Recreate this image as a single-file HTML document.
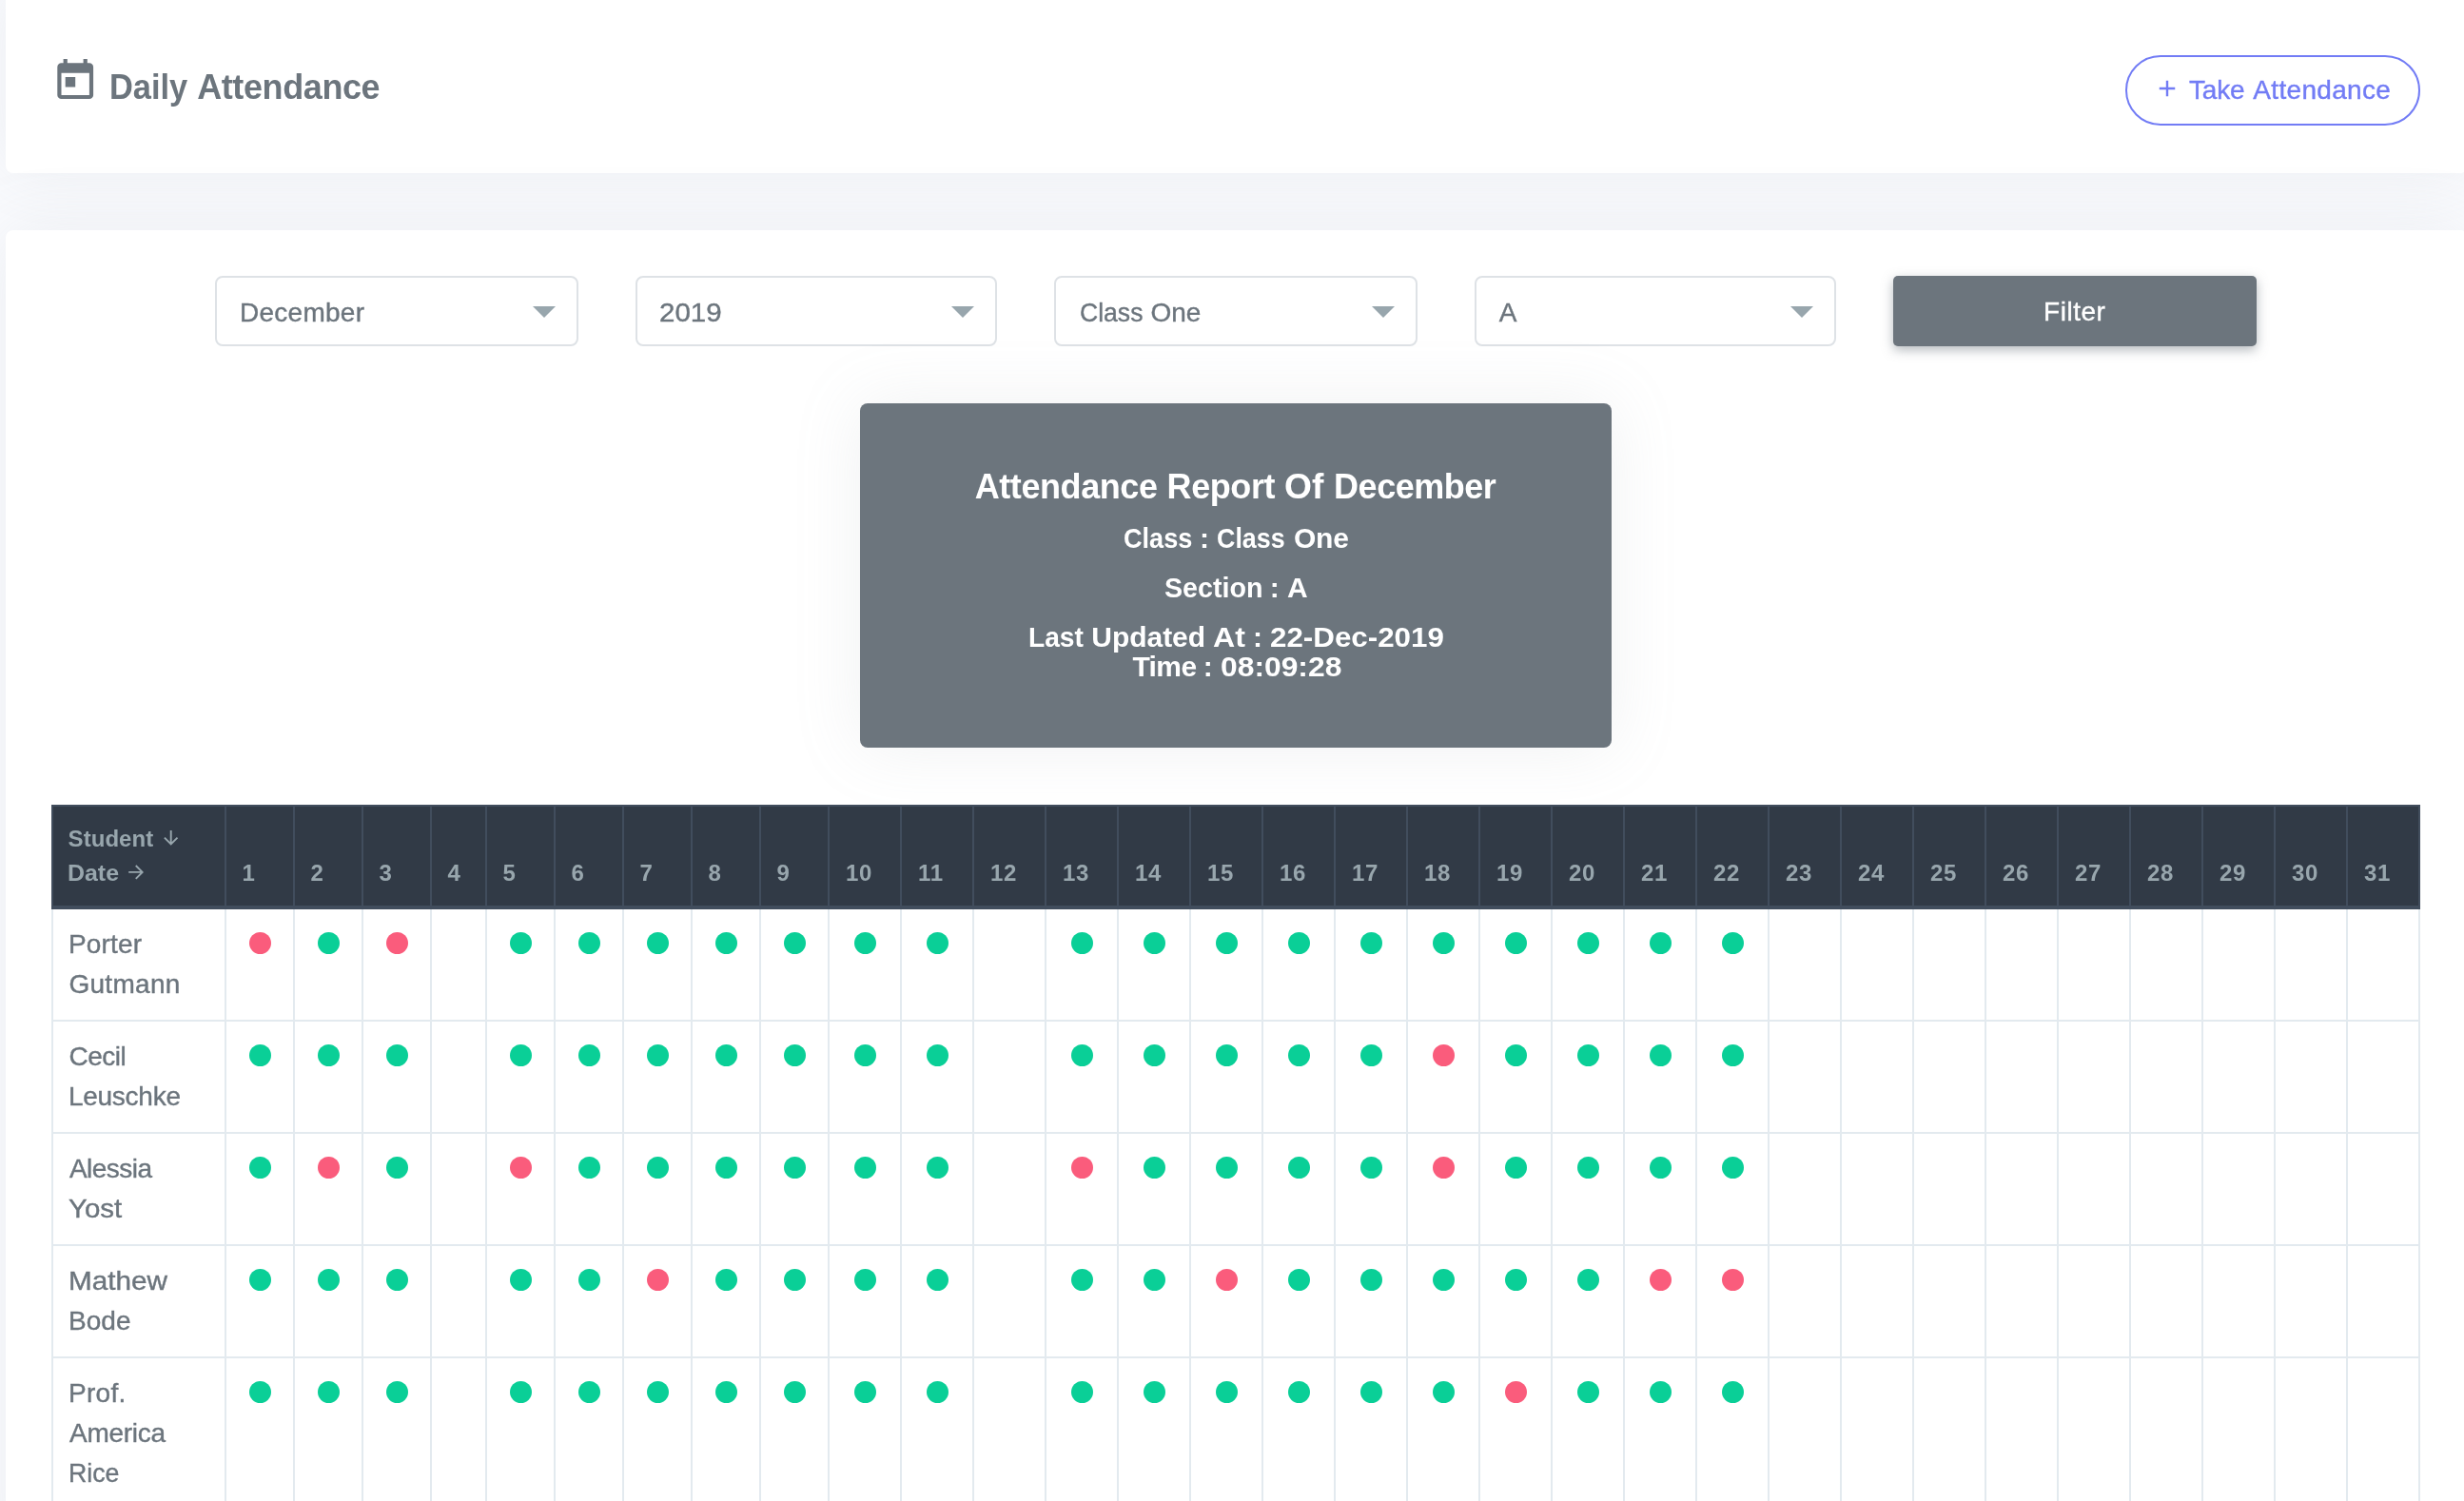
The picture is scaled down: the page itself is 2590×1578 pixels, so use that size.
<!DOCTYPE html><html><head><meta charset='utf-8'><title>Daily Attendance</title><style>
*{box-sizing:border-box}
html,body{margin:0;padding:0}
html{width:2590px;height:1578px;overflow:hidden}
body{width:2590px;height:1578px;overflow:hidden;position:relative;background:#fafbfe;font-family:'Liberation Sans', sans-serif;color:#6c757d}
.card{position:absolute;left:6px;width:2588px;background:#fff;border-radius:8px;box-shadow:0 0 70px 0 rgba(154,161,171,.15)}
.grp{margin:0;padding:0;position:static;display:block}
.t{transform-origin:0 50%;position:absolute;line-height:1;white-space:nowrap;margin:0;-webkit-text-stroke:0.4px currentColor}
.b{-webkit-text-stroke:0}
.sel{position:absolute;top:290px;height:74px;border:2px solid #dee2e6;border-radius:8px;background:#fff}
.sel i{position:absolute;right:22px;top:30px;width:0;height:0;border-left:12px solid transparent;border-right:12px solid transparent;border-top:12px solid #98a6ad}
.dot{position:absolute;width:23px;height:23px;border-radius:50%}
.g{background:#0acf97}
.r{background:#fa5c7c}
.v{position:absolute;width:2px}
.h{position:absolute;height:2px}
</style></head><body><div id='page' style='position:absolute;left:0;top:0;width:2590px;height:1578px;overflow:hidden;will-change:transform'>
<div class='card' style='top:-20px;height:202px'></div>
<div class='card' style='top:242px;height:1400px'></div>
<svg style='position:absolute;left:53.75px;top:60px' width='50.4' height='50.4' viewBox='0 0 24 24'><path fill='#6c757d' d='M7,10H12V15H7M19,19H5V8H19M19,3H18V1H16V3H8V1H6V3H5C3.89,3 3,3.9 3,5V19A2,2 0 0,0 5,21H19A2,2 0 0,0 21,19V5A2,2 0 0,0 19,3Z'/></svg>
<h4 class='grp' style='font-size:36px;font-weight:700;color:#6c757d'><span class='t b' style='left:115.0px;top:73.7px;transform:scaleX(0.9560)'>Daily</span> <span class='t b' style='left:207.2px;top:73.7px;letter-spacing:-0.400px'>Attendance</span></h4>
<div style='position:absolute;left:2234px;top:58px;width:310px;height:74px;border:2px solid #727cf5;border-radius:37px'></div>
<svg style='position:absolute;left:2268.2px;top:83.4px' width='20' height='20' viewBox='0 0 20 20'><path d='M10 1.75V18.25M1.75 10H18.25' stroke='#727cf5' stroke-width='2.4' fill='none'/></svg>
<span class='grp' style='font-size:28px;font-weight:400;color:#727cf5'><span class='t ' style='left:2301.1px;top:80.9px;letter-spacing:-0.233px'>Take</span> <span class='t ' style='left:2368.3px;top:80.9px;letter-spacing:0.322px'>Attendance</span></span>
<div class='sel' style='left:226px;width:382px'><i></i></div>
<span class='grp' style='font-size:28px;font-weight:400;color:#6c757d'><span class='t ' style='left:252.1px;top:314.6px;letter-spacing:0.243px'>December</span></span>
<div class='sel' style='left:668px;width:380px'><i></i></div>
<span class='grp' style='font-size:28px;font-weight:400;color:#6c757d'><span class='t ' style='left:693.1px;top:314.6px;transform:scaleX(1.0533)'>2019</span></span>
<div class='sel' style='left:1108px;width:382px'><i></i></div>
<span class='grp' style='font-size:28px;font-weight:400;color:#6c757d'><span class='t ' style='left:1134.6px;top:314.6px;transform:scaleX(0.9485)'>Class</span> <span class='t ' style='left:1209.4px;top:314.6px;letter-spacing:0.000px'>One</span></span>
<div class='sel' style='left:1550px;width:380px'><i></i></div>
<span class='grp' style='font-size:28px;font-weight:400;color:#6c757d'><span class='t ' style='left:1575.7px;top:314.6px'>A</span></span>
<div style='position:absolute;left:1990px;top:290px;width:382px;height:74px;background:#6c757d;border-radius:5px;box-shadow:0 4px 12px 0 rgba(108,117,125,.5)'></div>
<span class='grp' style='font-size:28px;font-weight:400;color:#fff'><span class='t ' style='left:2148.0px;top:313.8px;letter-spacing:0.540px'>Filter</span></span>
<div style='position:absolute;left:904px;top:424px;width:790px;height:362px;background:#6c757d;border-radius:8px;box-shadow:0 0 70px 0 rgba(154,161,171,.15)'></div>
<h4 class='grp' style='font-size:36px;font-weight:700;color:#fff'><span class='t b' style='left:1024.7px;top:494.3px;letter-spacing:-0.422px'>Attendance</span> <span class='t b' style='left:1226.6px;top:494.3px;letter-spacing:-0.420px'>Report</span> <span class='t b' style='left:1350.2px;top:494.3px;transform:scaleX(1.0342)'>Of</span> <span class='t b' style='left:1402.1px;top:494.3px;letter-spacing:-0.486px'>December</span></h4>
<h5 class='grp' style='font-size:30px;font-weight:700;color:#fff'><span class='t b' style='left:1180.9px;top:551.0px;transform:scaleX(0.9038)'>Class</span> <span class='t b' style='left:1261.1px;top:551.0px'>:</span> <span class='t b' style='left:1279.3px;top:551.0px;transform:scaleX(0.8949)'>Class</span> <span class='t b' style='left:1359.9px;top:551.0px;letter-spacing:-0.150px'>One</span></h5>
<h5 class='grp' style='font-size:30px;font-weight:700;color:#fff'><span class='t b' style='left:1223.5px;top:602.7px;transform:scaleX(0.9547)'>Section</span> <span class='t b' style='left:1334.8px;top:602.7px'>:</span> <span class='t b' style='left:1353.1px;top:602.7px'>A</span></h5>
<h5 class='grp' style='font-size:30px;font-weight:700;color:#fff'><span class='t b' style='left:1080.8px;top:655.0px;transform:scaleX(0.9390)'>Last</span> <span class='t b' style='left:1147.3px;top:655.0px;letter-spacing:-0.033px'>Updated</span> <span class='t b' style='left:1274.8px;top:655.0px;transform:scaleX(1.0700)'>At</span> <span class='t b' style='left:1317.0px;top:655.0px'>:</span> <span class='t b' style='left:1335.0px;top:655.0px;transform:scaleX(1.0439)'>22-Dec-2019</span></h5>
<h5 class='grp' style='font-size:30px;font-weight:700;color:#fff'><span class='t b' style='left:1190.4px;top:686.3px;letter-spacing:-0.567px'>Time</span> <span class='t b' style='left:1264.8px;top:686.3px'>:</span> <span class='t b' style='left:1282.7px;top:686.3px;transform:scaleX(1.0602)'>08:09:28</span></h5>
<div style='position:absolute;left:54px;top:846px;width:2490px;height:110px;background:#313a46'></div>
<div class='h' style='left:54px;top:846px;width:2490px;background:#414d5d'></div>
<div class='h' style='left:54px;top:952px;width:2490px;height:4px;background:#414d5d'></div>
<div class='v' style='left:54px;top:846px;height:106px;background:#414d5d'></div>
<div class='v' style='left:236px;top:846px;height:106px;background:#414d5d'></div>
<div class='v' style='left:308px;top:846px;height:106px;background:#414d5d'></div>
<div class='v' style='left:380px;top:846px;height:106px;background:#414d5d'></div>
<div class='v' style='left:452px;top:846px;height:106px;background:#414d5d'></div>
<div class='v' style='left:510px;top:846px;height:106px;background:#414d5d'></div>
<div class='v' style='left:582px;top:846px;height:106px;background:#414d5d'></div>
<div class='v' style='left:654px;top:846px;height:106px;background:#414d5d'></div>
<div class='v' style='left:726px;top:846px;height:106px;background:#414d5d'></div>
<div class='v' style='left:798px;top:846px;height:106px;background:#414d5d'></div>
<div class='v' style='left:870px;top:846px;height:106px;background:#414d5d'></div>
<div class='v' style='left:946px;top:846px;height:106px;background:#414d5d'></div>
<div class='v' style='left:1022px;top:846px;height:106px;background:#414d5d'></div>
<div class='v' style='left:1098px;top:846px;height:106px;background:#414d5d'></div>
<div class='v' style='left:1174px;top:846px;height:106px;background:#414d5d'></div>
<div class='v' style='left:1250px;top:846px;height:106px;background:#414d5d'></div>
<div class='v' style='left:1326px;top:846px;height:106px;background:#414d5d'></div>
<div class='v' style='left:1402px;top:846px;height:106px;background:#414d5d'></div>
<div class='v' style='left:1478px;top:846px;height:106px;background:#414d5d'></div>
<div class='v' style='left:1554px;top:846px;height:106px;background:#414d5d'></div>
<div class='v' style='left:1630px;top:846px;height:106px;background:#414d5d'></div>
<div class='v' style='left:1706px;top:846px;height:106px;background:#414d5d'></div>
<div class='v' style='left:1782px;top:846px;height:106px;background:#414d5d'></div>
<div class='v' style='left:1858px;top:846px;height:106px;background:#414d5d'></div>
<div class='v' style='left:1934px;top:846px;height:106px;background:#414d5d'></div>
<div class='v' style='left:2010px;top:846px;height:106px;background:#414d5d'></div>
<div class='v' style='left:2086px;top:846px;height:106px;background:#414d5d'></div>
<div class='v' style='left:2162px;top:846px;height:106px;background:#414d5d'></div>
<div class='v' style='left:2238px;top:846px;height:106px;background:#414d5d'></div>
<div class='v' style='left:2314px;top:846px;height:106px;background:#414d5d'></div>
<div class='v' style='left:2390px;top:846px;height:106px;background:#414d5d'></div>
<div class='v' style='left:2466px;top:846px;height:106px;background:#414d5d'></div>
<div class='v' style='left:2542px;top:846px;height:106px;background:#414d5d'></div>
<div class='v' style='left:54px;top:956px;height:700px;background:#e3eaef'></div>
<div class='v' style='left:236px;top:956px;height:700px;background:#e3eaef'></div>
<div class='v' style='left:308px;top:956px;height:700px;background:#e3eaef'></div>
<div class='v' style='left:380px;top:956px;height:700px;background:#e3eaef'></div>
<div class='v' style='left:452px;top:956px;height:700px;background:#e3eaef'></div>
<div class='v' style='left:510px;top:956px;height:700px;background:#e3eaef'></div>
<div class='v' style='left:582px;top:956px;height:700px;background:#e3eaef'></div>
<div class='v' style='left:654px;top:956px;height:700px;background:#e3eaef'></div>
<div class='v' style='left:726px;top:956px;height:700px;background:#e3eaef'></div>
<div class='v' style='left:798px;top:956px;height:700px;background:#e3eaef'></div>
<div class='v' style='left:870px;top:956px;height:700px;background:#e3eaef'></div>
<div class='v' style='left:946px;top:956px;height:700px;background:#e3eaef'></div>
<div class='v' style='left:1022px;top:956px;height:700px;background:#e3eaef'></div>
<div class='v' style='left:1098px;top:956px;height:700px;background:#e3eaef'></div>
<div class='v' style='left:1174px;top:956px;height:700px;background:#e3eaef'></div>
<div class='v' style='left:1250px;top:956px;height:700px;background:#e3eaef'></div>
<div class='v' style='left:1326px;top:956px;height:700px;background:#e3eaef'></div>
<div class='v' style='left:1402px;top:956px;height:700px;background:#e3eaef'></div>
<div class='v' style='left:1478px;top:956px;height:700px;background:#e3eaef'></div>
<div class='v' style='left:1554px;top:956px;height:700px;background:#e3eaef'></div>
<div class='v' style='left:1630px;top:956px;height:700px;background:#e3eaef'></div>
<div class='v' style='left:1706px;top:956px;height:700px;background:#e3eaef'></div>
<div class='v' style='left:1782px;top:956px;height:700px;background:#e3eaef'></div>
<div class='v' style='left:1858px;top:956px;height:700px;background:#e3eaef'></div>
<div class='v' style='left:1934px;top:956px;height:700px;background:#e3eaef'></div>
<div class='v' style='left:2010px;top:956px;height:700px;background:#e3eaef'></div>
<div class='v' style='left:2086px;top:956px;height:700px;background:#e3eaef'></div>
<div class='v' style='left:2162px;top:956px;height:700px;background:#e3eaef'></div>
<div class='v' style='left:2238px;top:956px;height:700px;background:#e3eaef'></div>
<div class='v' style='left:2314px;top:956px;height:700px;background:#e3eaef'></div>
<div class='v' style='left:2390px;top:956px;height:700px;background:#e3eaef'></div>
<div class='v' style='left:2466px;top:956px;height:700px;background:#e3eaef'></div>
<div class='v' style='left:2542px;top:956px;height:700px;background:#e3eaef'></div>
<div class='h' style='left:54px;top:1072px;width:2490px;background:#e3eaef'></div>
<div class='h' style='left:54px;top:1190px;width:2490px;background:#e3eaef'></div>
<div class='h' style='left:54px;top:1308px;width:2490px;background:#e3eaef'></div>
<div class='h' style='left:54px;top:1426px;width:2490px;background:#e3eaef'></div>
<span class='grp' style='font-size:24px;font-weight:700;color:#98a6ad'><span class='t b' style='left:71.6px;top:869.9px;letter-spacing:0.050px'>Student</span></span>
<span class='grp' style='font-size:24px;font-weight:700;color:#98a6ad'><span class='t b' style='left:71.0px;top:905.8px;transform:scaleX(1.0388)'>Date</span></span>
<svg style='position:absolute;left:170px;top:871px' width='20' height='20' viewBox='0 0 20 20'><path d='M9.7 2V17M2.9 9.66L9.7 16.46L16.5 9.66' stroke='#98a6ad' stroke-width='1.9' fill='none' stroke-linecap='butt' stroke-linejoin='miter'/></svg>
<svg style='position:absolute;left:133px;top:907px' width='20' height='20' viewBox='0 0 20 20'><path d='M2.2 9.9H16.5M9.76 3L16.66 9.9L9.76 16.8' stroke='#98a6ad' stroke-width='1.9' fill='none' stroke-linecap='butt' stroke-linejoin='miter'/></svg>
<span class='t b' style='left:254.5px;top:905.8px;font-size:24px;font-weight:700;letter-spacing:0px;color:#98a6ad'>1</span>
<span class='t b' style='left:326.5px;top:905.8px;font-size:24px;font-weight:700;letter-spacing:0px;color:#98a6ad'>2</span>
<span class='t b' style='left:398.5px;top:905.8px;font-size:24px;font-weight:700;letter-spacing:0px;color:#98a6ad'>3</span>
<span class='t b' style='left:470.5px;top:905.8px;font-size:24px;font-weight:700;letter-spacing:0px;color:#98a6ad'>4</span>
<span class='t b' style='left:528.5px;top:905.8px;font-size:24px;font-weight:700;letter-spacing:0px;color:#98a6ad'>5</span>
<span class='t b' style='left:600.5px;top:905.8px;font-size:24px;font-weight:700;letter-spacing:0px;color:#98a6ad'>6</span>
<span class='t b' style='left:672.5px;top:905.8px;font-size:24px;font-weight:700;letter-spacing:0px;color:#98a6ad'>7</span>
<span class='t b' style='left:744.5px;top:905.8px;font-size:24px;font-weight:700;letter-spacing:0px;color:#98a6ad'>8</span>
<span class='t b' style='left:816.5px;top:905.8px;font-size:24px;font-weight:700;letter-spacing:0px;color:#98a6ad'>9</span>
<span class='t b' style='left:888.9px;top:905.8px;font-size:24px;font-weight:700;letter-spacing:0.8px;color:#98a6ad'>10</span>
<span class='t b' style='left:964.9px;top:905.8px;font-size:24px;font-weight:700;letter-spacing:0.8px;color:#98a6ad'>11</span>
<span class='t b' style='left:1040.9px;top:905.8px;font-size:24px;font-weight:700;letter-spacing:0.8px;color:#98a6ad'>12</span>
<span class='t b' style='left:1116.9px;top:905.8px;font-size:24px;font-weight:700;letter-spacing:0.8px;color:#98a6ad'>13</span>
<span class='t b' style='left:1192.9px;top:905.8px;font-size:24px;font-weight:700;letter-spacing:0.8px;color:#98a6ad'>14</span>
<span class='t b' style='left:1268.9px;top:905.8px;font-size:24px;font-weight:700;letter-spacing:0.8px;color:#98a6ad'>15</span>
<span class='t b' style='left:1344.9px;top:905.8px;font-size:24px;font-weight:700;letter-spacing:0.8px;color:#98a6ad'>16</span>
<span class='t b' style='left:1420.9px;top:905.8px;font-size:24px;font-weight:700;letter-spacing:0.8px;color:#98a6ad'>17</span>
<span class='t b' style='left:1496.9px;top:905.8px;font-size:24px;font-weight:700;letter-spacing:0.8px;color:#98a6ad'>18</span>
<span class='t b' style='left:1572.9px;top:905.8px;font-size:24px;font-weight:700;letter-spacing:0.8px;color:#98a6ad'>19</span>
<span class='t b' style='left:1648.9px;top:905.8px;font-size:24px;font-weight:700;letter-spacing:0.8px;color:#98a6ad'>20</span>
<span class='t b' style='left:1724.9px;top:905.8px;font-size:24px;font-weight:700;letter-spacing:0.8px;color:#98a6ad'>21</span>
<span class='t b' style='left:1800.9px;top:905.8px;font-size:24px;font-weight:700;letter-spacing:0.8px;color:#98a6ad'>22</span>
<span class='t b' style='left:1876.9px;top:905.8px;font-size:24px;font-weight:700;letter-spacing:0.8px;color:#98a6ad'>23</span>
<span class='t b' style='left:1952.9px;top:905.8px;font-size:24px;font-weight:700;letter-spacing:0.8px;color:#98a6ad'>24</span>
<span class='t b' style='left:2028.9px;top:905.8px;font-size:24px;font-weight:700;letter-spacing:0.8px;color:#98a6ad'>25</span>
<span class='t b' style='left:2104.9px;top:905.8px;font-size:24px;font-weight:700;letter-spacing:0.8px;color:#98a6ad'>26</span>
<span class='t b' style='left:2180.9px;top:905.8px;font-size:24px;font-weight:700;letter-spacing:0.8px;color:#98a6ad'>27</span>
<span class='t b' style='left:2256.9px;top:905.8px;font-size:24px;font-weight:700;letter-spacing:0.8px;color:#98a6ad'>28</span>
<span class='t b' style='left:2332.9px;top:905.8px;font-size:24px;font-weight:700;letter-spacing:0.8px;color:#98a6ad'>29</span>
<span class='t b' style='left:2408.9px;top:905.8px;font-size:24px;font-weight:700;letter-spacing:0.8px;color:#98a6ad'>30</span>
<span class='t b' style='left:2484.9px;top:905.8px;font-size:24px;font-weight:700;letter-spacing:0.8px;color:#98a6ad'>31</span>
<span class='grp' style='font-size:28px;font-weight:400;color:#6c757d'><span class='t ' style='left:71.9px;top:979.0px;letter-spacing:0.180px'>Porter</span></span>
<span class='grp' style='font-size:28px;font-weight:400;color:#6c757d'><span class='t ' style='left:72.4px;top:1021.0px;letter-spacing:0.300px'>Gutmann</span></span>
<i class='dot r' style='left:261.5px;top:979.9px'></i>
<i class='dot g' style='left:333.5px;top:979.9px'></i>
<i class='dot r' style='left:405.5px;top:979.9px'></i>
<i class='dot g' style='left:535.5px;top:979.9px'></i>
<i class='dot g' style='left:607.5px;top:979.9px'></i>
<i class='dot g' style='left:679.5px;top:979.9px'></i>
<i class='dot g' style='left:751.5px;top:979.9px'></i>
<i class='dot g' style='left:823.5px;top:979.9px'></i>
<i class='dot g' style='left:897.5px;top:979.9px'></i>
<i class='dot g' style='left:973.5px;top:979.9px'></i>
<i class='dot g' style='left:1125.5px;top:979.9px'></i>
<i class='dot g' style='left:1201.5px;top:979.9px'></i>
<i class='dot g' style='left:1277.5px;top:979.9px'></i>
<i class='dot g' style='left:1353.5px;top:979.9px'></i>
<i class='dot g' style='left:1429.5px;top:979.9px'></i>
<i class='dot g' style='left:1505.5px;top:979.9px'></i>
<i class='dot g' style='left:1581.5px;top:979.9px'></i>
<i class='dot g' style='left:1657.5px;top:979.9px'></i>
<i class='dot g' style='left:1733.5px;top:979.9px'></i>
<i class='dot g' style='left:1809.5px;top:979.9px'></i>
<span class='grp' style='font-size:28px;font-weight:400;color:#6c757d'><span class='t ' style='left:72.4px;top:1097.0px;letter-spacing:-0.475px'>Cecil</span></span>
<span class='grp' style='font-size:28px;font-weight:400;color:#6c757d'><span class='t ' style='left:71.9px;top:1139.0px;letter-spacing:-0.257px'>Leuschke</span></span>
<i class='dot g' style='left:261.5px;top:1097.8px'></i>
<i class='dot g' style='left:333.5px;top:1097.8px'></i>
<i class='dot g' style='left:405.5px;top:1097.8px'></i>
<i class='dot g' style='left:535.5px;top:1097.8px'></i>
<i class='dot g' style='left:607.5px;top:1097.8px'></i>
<i class='dot g' style='left:679.5px;top:1097.8px'></i>
<i class='dot g' style='left:751.5px;top:1097.8px'></i>
<i class='dot g' style='left:823.5px;top:1097.8px'></i>
<i class='dot g' style='left:897.5px;top:1097.8px'></i>
<i class='dot g' style='left:973.5px;top:1097.8px'></i>
<i class='dot g' style='left:1125.5px;top:1097.8px'></i>
<i class='dot g' style='left:1201.5px;top:1097.8px'></i>
<i class='dot g' style='left:1277.5px;top:1097.8px'></i>
<i class='dot g' style='left:1353.5px;top:1097.8px'></i>
<i class='dot g' style='left:1429.5px;top:1097.8px'></i>
<i class='dot r' style='left:1505.5px;top:1097.8px'></i>
<i class='dot g' style='left:1581.5px;top:1097.8px'></i>
<i class='dot g' style='left:1657.5px;top:1097.8px'></i>
<i class='dot g' style='left:1733.5px;top:1097.8px'></i>
<i class='dot g' style='left:1809.5px;top:1097.8px'></i>
<span class='grp' style='font-size:28px;font-weight:400;color:#6c757d'><span class='t ' style='left:72.9px;top:1215.0px;letter-spacing:-0.517px'>Alessia</span></span>
<span class='grp' style='font-size:28px;font-weight:400;color:#6c757d'><span class='t ' style='left:71.8px;top:1257.0px;transform:scaleX(1.0528)'>Yost</span></span>
<i class='dot g' style='left:261.5px;top:1215.8px'></i>
<i class='dot r' style='left:333.5px;top:1215.8px'></i>
<i class='dot g' style='left:405.5px;top:1215.8px'></i>
<i class='dot r' style='left:535.5px;top:1215.8px'></i>
<i class='dot g' style='left:607.5px;top:1215.8px'></i>
<i class='dot g' style='left:679.5px;top:1215.8px'></i>
<i class='dot g' style='left:751.5px;top:1215.8px'></i>
<i class='dot g' style='left:823.5px;top:1215.8px'></i>
<i class='dot g' style='left:897.5px;top:1215.8px'></i>
<i class='dot g' style='left:973.5px;top:1215.8px'></i>
<i class='dot r' style='left:1125.5px;top:1215.8px'></i>
<i class='dot g' style='left:1201.5px;top:1215.8px'></i>
<i class='dot g' style='left:1277.5px;top:1215.8px'></i>
<i class='dot g' style='left:1353.5px;top:1215.8px'></i>
<i class='dot g' style='left:1429.5px;top:1215.8px'></i>
<i class='dot r' style='left:1505.5px;top:1215.8px'></i>
<i class='dot g' style='left:1581.5px;top:1215.8px'></i>
<i class='dot g' style='left:1657.5px;top:1215.8px'></i>
<i class='dot g' style='left:1733.5px;top:1215.8px'></i>
<i class='dot g' style='left:1809.5px;top:1215.8px'></i>
<span class='grp' style='font-size:28px;font-weight:400;color:#6c757d'><span class='t ' style='left:71.8px;top:1333.0px;transform:scaleX(1.0604)'>Mathew</span></span>
<span class='grp' style='font-size:28px;font-weight:400;color:#6c757d'><span class='t ' style='left:71.9px;top:1375.0px;letter-spacing:0.067px'>Bode</span></span>
<i class='dot g' style='left:261.5px;top:1333.8px'></i>
<i class='dot g' style='left:333.5px;top:1333.8px'></i>
<i class='dot g' style='left:405.5px;top:1333.8px'></i>
<i class='dot g' style='left:535.5px;top:1333.8px'></i>
<i class='dot g' style='left:607.5px;top:1333.8px'></i>
<i class='dot r' style='left:679.5px;top:1333.8px'></i>
<i class='dot g' style='left:751.5px;top:1333.8px'></i>
<i class='dot g' style='left:823.5px;top:1333.8px'></i>
<i class='dot g' style='left:897.5px;top:1333.8px'></i>
<i class='dot g' style='left:973.5px;top:1333.8px'></i>
<i class='dot g' style='left:1125.5px;top:1333.8px'></i>
<i class='dot g' style='left:1201.5px;top:1333.8px'></i>
<i class='dot r' style='left:1277.5px;top:1333.8px'></i>
<i class='dot g' style='left:1353.5px;top:1333.8px'></i>
<i class='dot g' style='left:1429.5px;top:1333.8px'></i>
<i class='dot g' style='left:1505.5px;top:1333.8px'></i>
<i class='dot g' style='left:1581.5px;top:1333.8px'></i>
<i class='dot g' style='left:1657.5px;top:1333.8px'></i>
<i class='dot r' style='left:1733.5px;top:1333.8px'></i>
<i class='dot r' style='left:1809.5px;top:1333.8px'></i>
<span class='grp' style='font-size:28px;font-weight:400;color:#6c757d'><span class='t ' style='left:71.9px;top:1451.0px;letter-spacing:0.325px'>Prof.</span></span>
<span class='grp' style='font-size:28px;font-weight:400;color:#6c757d'><span class='t ' style='left:73.0px;top:1493.0px;letter-spacing:-0.258px'>America</span></span>
<span class='grp' style='font-size:28px;font-weight:400;color:#6c757d'><span class='t ' style='left:72.0px;top:1535.0px;transform:scaleX(0.9538)'>Rice</span></span>
<i class='dot g' style='left:261.5px;top:1451.8px'></i>
<i class='dot g' style='left:333.5px;top:1451.8px'></i>
<i class='dot g' style='left:405.5px;top:1451.8px'></i>
<i class='dot g' style='left:535.5px;top:1451.8px'></i>
<i class='dot g' style='left:607.5px;top:1451.8px'></i>
<i class='dot g' style='left:679.5px;top:1451.8px'></i>
<i class='dot g' style='left:751.5px;top:1451.8px'></i>
<i class='dot g' style='left:823.5px;top:1451.8px'></i>
<i class='dot g' style='left:897.5px;top:1451.8px'></i>
<i class='dot g' style='left:973.5px;top:1451.8px'></i>
<i class='dot g' style='left:1125.5px;top:1451.8px'></i>
<i class='dot g' style='left:1201.5px;top:1451.8px'></i>
<i class='dot g' style='left:1277.5px;top:1451.8px'></i>
<i class='dot g' style='left:1353.5px;top:1451.8px'></i>
<i class='dot g' style='left:1429.5px;top:1451.8px'></i>
<i class='dot g' style='left:1505.5px;top:1451.8px'></i>
<i class='dot r' style='left:1581.5px;top:1451.8px'></i>
<i class='dot g' style='left:1657.5px;top:1451.8px'></i>
<i class='dot g' style='left:1733.5px;top:1451.8px'></i>
<i class='dot g' style='left:1809.5px;top:1451.8px'></i>
</div></body></html>
